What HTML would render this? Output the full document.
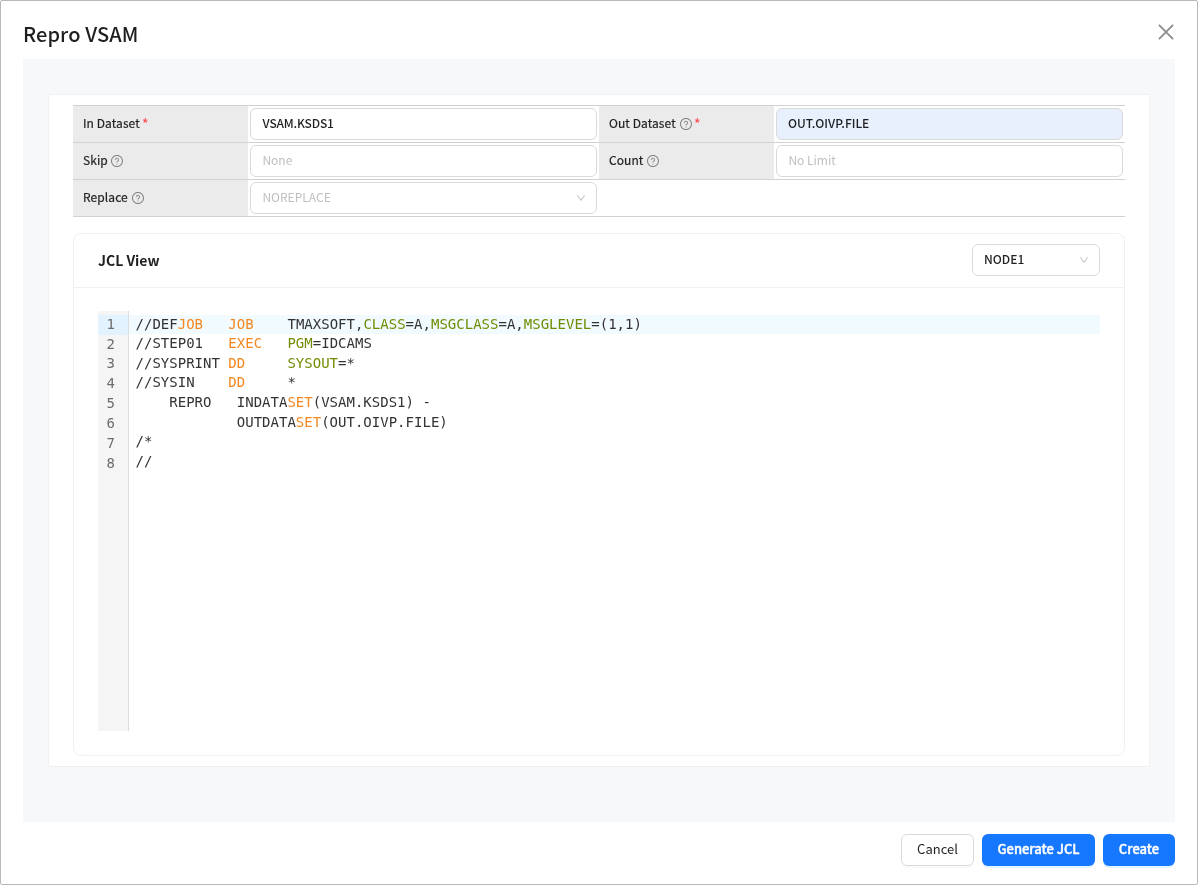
<!DOCTYPE html>
<html lang="en">
<head>
<meta charset="utf-8">
<title>Repro VSAM</title>
<style>
*{box-sizing:border-box;margin:0;padding:0}
html,body{width:1198px;height:885px;overflow:hidden;background:#fff}
body{position:relative;font-family:"Noto Sans CJK KR","Liberation Sans","NanumGothic",sans-serif;font-size:12px;color:rgba(0,0,0,.88);line-height:1.5715}
.frame{position:absolute;left:0;top:0;width:1198px;height:885px;border:1px solid #b8b8b8;border-radius:2px;pointer-events:none}
.title{position:absolute;left:23px;top:19px;font-size:20px;font-weight:500;line-height:30px;color:#1f1f1f;white-space:nowrap;letter-spacing:0.1px}
.close{position:absolute;left:1156px;top:22px;width:20px;height:20px}
.panel{position:absolute;left:23px;top:59px;width:1152px;height:763px;background:#f7f8fa}
.card{position:absolute;left:48px;top:94px;width:1102px;height:673px;background:#fff;border:1px solid #f0f0f0}
.tbl{position:absolute;left:73px;top:105px;width:1052px;border-top:1px solid #d2d2d2}
.row{display:flex;height:37px;border-bottom:1px solid #d2d2d2}
.lab{width:175px;background:#ebebeb;padding:0 0 2px 10px;display:flex;align-items:center;font-weight:400;color:#1f1f1f;white-space:nowrap;font-size:12px;letter-spacing:0.08px;-webkit-text-stroke:0.2px #1f1f1f}
.lab svg{margin-left:4px;flex:none;position:relative;top:1px}
.lab .req{color:#ff4d4f;margin-left:2px;font-size:15px;line-height:18px;position:relative;top:1px;font-weight:400;-webkit-text-stroke:0;letter-spacing:0}
.cell{width:351px;padding:2px}
.inp{width:347px;height:32px;border:1px solid #d9d9d9;border-radius:6px;background:#fff;padding:0 11px;line-height:28px;font-size:12px;color:rgba(0,0,0,.88);white-space:nowrap;position:relative;font-weight:500}
.inp.ph{color:#bfbfbf;font-weight:400;letter-spacing:0;padding-left:11.4px}
.inp.fill{background:#e8f0fe}
.arrow{position:absolute;right:10.3px;top:9.7px;width:10px;height:10px}
.jcl{position:absolute;left:73px;top:233px;width:1052px;height:523px;border:1px solid #f0f0f0;border-radius:8px;background:#fff}
.jhead{position:absolute;left:0;top:0;width:1050px;height:54px;border-bottom:1px solid #f0f0f0}
.jtitle{position:absolute;left:24px;top:15px;font-size:14px;font-weight:700;line-height:22px;color:#1f1f1f}
.sel{position:absolute;left:898px;top:10px;width:128px;height:32px;border:1px solid #d9d9d9;border-radius:6px;padding:0 11px;line-height:28px;font-size:12px;background:#fff;font-weight:500}
.ed{position:absolute;left:24px;top:77px;width:1002px;height:420px;font-family:"DejaVu Sans Mono","Liberation Mono",monospace;font-size:14px;line-height:19.6px;color:#333}
.gut{position:absolute;left:0;top:0;width:31px;height:420px;background:#f5f5f5;border-right:1px solid #ddd;color:#6c6c6c;padding-top:4px}
.gut div{position:absolute;left:0;width:20px;padding:0 3px 0 5px;text-align:right;height:19.84px}
.gut .act{background:#e2f2ff;width:30px;padding-right:13px;height:20px}
.code{position:absolute;left:31px;top:0;width:971px;padding-top:4px}
.code pre{position:absolute;left:0;width:971px;font:inherit;height:19.6px;padding:0 2px 0 6.5px;white-space:pre;letter-spacing:0.01px}
.code pre.act{background:#cceeff44;height:19px}
.k{color:#f5871f}
.a{color:#718c00}
.btn{position:absolute;top:834px;height:32px;border-radius:6px;font-size:13px;line-height:28px;text-align:center;white-space:nowrap}
.btn.def{border:1px solid #d9d9d9;background:#fff;color:rgba(0,0,0,.88);box-shadow:0 2px 0 rgba(0,0,0,.02)}
.btn.pri{background:#1677ff;color:#fff;font-weight:500;line-height:30px;box-shadow:0 2px 0 rgba(5,145,255,.1);-webkit-text-stroke:0.4px #fff}
</style>
</head>
<body><div id="root" style="position:absolute;left:0;top:0;width:1198px;height:885px;will-change:transform">
<div class="title">Repro VSAM</div>
<svg class="close" viewBox="0 0 20 20"><path d="M2.93 2.93 L17.07 17.07 M17.07 2.93 L2.93 17.07" stroke="#8c8c8c" stroke-width="1.82" fill="none"/></svg>
<div class="panel"></div>
<div class="card"></div>

<div class="tbl">
  <div class="row">
    <div class="lab">In Dataset<span class="req">*</span></div>
    <div class="cell"><div class="inp" style="letter-spacing:-0.18px;padding-left:11.6px">VSAM.KSDS1</div></div>
    <div class="lab">Out Dataset<svg width="12" height="12" viewBox="64 64 896 896" fill="rgba(0,0,0,.45)"><path d="M512 64C264.600 64 64 264.600 64 512s200.600 448 448 448 448-200.600 448-448S759.400 64 512 64zm0 820c-205.400 0-372-166.600-372-372s166.600-372 372-372 372 166.600 372 372-166.600 372-372 372z"/><path d="M623.600 316.700C593.600 290.400 554 276 512 276s-81.600 14.500-111.600 40.700C369.200 344 352 380.700 352 420v7.600c0 4.400 3.600 8 8 8h48c4.400 0 8-3.600 8-8V420c0-44.100 43.100-80 96-80s96 35.900 96 80c0 31.100-22 59.600-56.100 72.700-21.200 8.100-39.200 22.300-52.100 40.900-13.100 19-19.900 41.800-19.900 64.900V620c0 4.400 3.600 8 8 8h48c4.400 0 8-3.600 8-8v-22.700a48.300 48.300 0 0130.900-44.800c59-22.700 97.100-74.700 97.100-132.500.1-39.300-17.100-76-48.300-103.300zM472 732a40 40 0 1080 0 40 40 0 10-80 0z"/></svg><span class="req">*</span></div>
    <div class="cell"><div class="inp fill">OUT.OIVP.FILE</div></div>
  </div>
  <div class="row">
    <div class="lab">Skip<svg style="margin-left:3.2px" width="12" height="12" viewBox="64 64 896 896" fill="rgba(0,0,0,.45)"><path d="M512 64C264.600 64 64 264.600 64 512s200.600 448 448 448 448-200.600 448-448S759.400 64 512 64zm0 820c-205.400 0-372-166.600-372-372s166.600-372 372-372 372 166.600 372 372-166.600 372-372 372z"/><path d="M623.600 316.700C593.600 290.400 554 276 512 276s-81.600 14.500-111.600 40.700C369.200 344 352 380.700 352 420v7.600c0 4.400 3.600 8 8 8h48c4.400 0 8-3.600 8-8V420c0-44.100 43.100-80 96-80s96 35.900 96 80c0 31.100-22 59.600-56.100 72.700-21.200 8.100-39.200 22.300-52.100 40.900-13.100 19-19.900 41.800-19.900 64.900V620c0 4.400 3.600 8 8 8h48c4.400 0 8-3.600 8-8v-22.700a48.300 48.300 0 0130.900-44.800c59-22.700 97.100-74.700 97.100-132.500.1-39.300-17.100-76-48.300-103.300zM472 732a40 40 0 1080 0 40 40 0 10-80 0z"/></svg></div>
    <div class="cell"><div class="inp ph">None</div></div>
    <div class="lab">Count<svg width="12" height="12" viewBox="64 64 896 896" fill="rgba(0,0,0,.45)"><path d="M512 64C264.600 64 64 264.600 64 512s200.600 448 448 448 448-200.600 448-448S759.400 64 512 64zm0 820c-205.400 0-372-166.600-372-372s166.600-372 372-372 372 166.600 372 372-166.600 372-372 372z"/><path d="M623.600 316.700C593.600 290.400 554 276 512 276s-81.600 14.500-111.600 40.700C369.200 344 352 380.700 352 420v7.600c0 4.400 3.600 8 8 8h48c4.400 0 8-3.600 8-8V420c0-44.100 43.100-80 96-80s96 35.900 96 80c0 31.100-22 59.600-56.100 72.700-21.200 8.100-39.200 22.300-52.100 40.900-13.100 19-19.900 41.800-19.900 64.900V620c0 4.400 3.600 8 8 8h48c4.400 0 8-3.600 8-8v-22.700a48.300 48.300 0 0130.900-44.800c59-22.700 97.100-74.700 97.100-132.500.1-39.300-17.100-76-48.300-103.300zM472 732a40 40 0 1080 0 40 40 0 10-80 0z"/></svg></div>
    <div class="cell"><div class="inp ph">No Limit</div></div>
  </div>
  <div class="row">
    <div class="lab">Replace<svg width="12" height="12" viewBox="64 64 896 896" fill="rgba(0,0,0,.45)"><path d="M512 64C264.600 64 64 264.600 64 512s200.600 448 448 448 448-200.600 448-448S759.400 64 512 64zm0 820c-205.400 0-372-166.600-372-372s166.600-372 372-372 372 166.600 372 372-166.600 372-372 372z"/><path d="M623.600 316.700C593.600 290.400 554 276 512 276s-81.600 14.500-111.600 40.700C369.200 344 352 380.700 352 420v7.600c0 4.400 3.600 8 8 8h48c4.400 0 8-3.600 8-8V420c0-44.100 43.100-80 96-80s96 35.900 96 80c0 31.100-22 59.600-56.100 72.700-21.200 8.100-39.200 22.300-52.100 40.900-13.100 19-19.900 41.800-19.900 64.900V620c0 4.400 3.600 8 8 8h48c4.400 0 8-3.600 8-8v-22.700a48.300 48.300 0 0130.900-44.800c59-22.700 97.100-74.700 97.100-132.500.1-39.300-17.100-76-48.300-103.300zM472 732a40 40 0 1080 0 40 40 0 10-80 0z"/></svg></div>
    <div class="cell"><div class="inp ph">NOREPLACE<svg class="arrow" viewBox="64 64 896 896" fill="#bfbfbf"><path d="M884 256h-75c-5.100 0-9.900 2.500-12.900 6.600L512 654.200 227.900 262.600c-3-4.100-7.800-6.600-12.900-6.600h-75c-6.500 0-10.300 7.400-6.500 12.700l352.600 486.100c12.800 17.600 39 17.600 51.700 0l352.600-486.100c3.900-5.300.1-12.700-6.400-12.700z"/></svg></div></div>
  </div>
</div>

<div class="jcl">
  <div class="jhead">
    <div class="jtitle">JCL View</div>
    <div class="sel">NODE1<svg class="arrow" viewBox="64 64 896 896" fill="#bfbfbf"><path d="M884 256h-75c-5.100 0-9.900 2.500-12.900 6.600L512 654.200 227.900 262.600c-3-4.100-7.800-6.600-12.900-6.600h-75c-6.500 0-10.300 7.400-6.500 12.700l352.600 486.100c12.800 17.600 39 17.600 51.700 0l352.600-486.100c3.900-5.300.1-12.700-6.400-12.700z"/></svg></div>
  </div>
  <div class="ed">
    <div class="gut"><div class="act" style="top:4px">1</div><div style="top:24px">2</div><div style="top:43px">3</div><div style="top:63px">4</div><div style="top:83px">5</div><div style="top:103px">6</div><div style="top:123px">7</div><div style="top:143px">8</div></div>
    <div class="code"><pre class="act" style="top:4px">//DEF<span class="k">JOB</span>   <span class="k">JOB</span>    TMAXSOFT,<span class="a">CLASS</span>=A,<span class="a">MSGCLASS</span>=A,<span class="a">MSGLEVEL</span>=(1,1)</pre><pre style="top:23px">//STEP01   <span class="k">EXEC</span>   <span class="a">PGM</span>=IDCAMS</pre><pre style="top:43px">//SYSPRINT <span class="k">DD</span>     <span class="a">SYSOUT</span>=*</pre><pre style="top:62px">//SYSIN    <span class="k">DD</span>     *</pre><pre style="top:82px">    REPRO   INDATA<span class="k">SET</span>(VSAM.KSDS1) -</pre><pre style="top:102px">            OUTDATA<span class="k">SET</span>(OUT.OIVP.FILE)</pre><pre style="top:121px">/*</pre><pre style="top:141px">//</pre></div>
  </div>
</div>

<div class="btn def" style="left:901px;width:73px">Cancel</div>
<div class="btn pri" style="left:982px;width:113px">Generate JCL</div>
<div class="btn pri" style="left:1103px;width:72px">Create</div>
<div class="frame"></div>
</div></body>
</html>
